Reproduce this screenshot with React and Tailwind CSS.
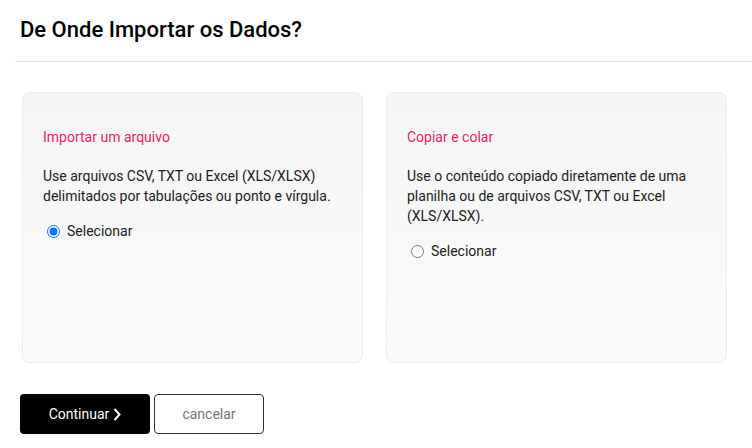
import { useState } from "react";

function OptionCard({ title, text, checked, onSelect }) {
  return (
    <div className="h-[271px] rounded-lg border border-[#ececec] bg-gradient-to-b from-[#f5f5f5] to-[#fafafa] px-[20px] pt-[34px]">
      <h3 className="text-[14px] leading-[20px] text-[#e91e63]">{title}</h3>
      <p className="mt-[19px] text-[14px] leading-[20px] text-[#212121]">{text}</p>
      <label className="mt-[15px] flex items-center gap-[7px] pl-[4px] text-[14px] leading-[20px] text-[#212121] cursor-pointer">
        <input
          type="radio"
          name="origem"
          checked={checked}
          onChange={onSelect}
          className="m-0 h-[13px] w-[13px]"
        />
        Selecionar
      </label>
    </div>
  );
}

export default function App() {
  const [origem, setOrigem] = useState("arquivo");

  return (
    <div className="min-h-[448px] bg-white" style={{ fontFamily: "Roboto, 'Liberation Sans', sans-serif" }}>
      <div className="pl-[20px] pt-[17px] pb-[18px]">
        <h1 className="text-[22px] leading-[26px] font-medium text-black">De Onde Importar os Dados?</h1>
      </div>
      <div className="ml-[15px] border-t border-[#e0e0e0]" />

      <div className="grid grid-cols-2 gap-[23px] pl-[22px] pr-[25px] pt-[30px]">
        <OptionCard
          title="Importar um arquivo"
          text="Use arquivos CSV, TXT ou Excel (XLS/XLSX) delimitados por tabulações ou ponto e vírgula."
          checked={origem === "arquivo"}
          onSelect={() => setOrigem("arquivo")}
        />
        <OptionCard
          title="Copiar e colar"
          text="Use o conteúdo copiado diretamente de uma planilha ou de arquivos CSV, TXT ou Excel (XLS/XLSX)."
          checked={origem === "colar"}
          onSelect={() => setOrigem("colar")}
        />
      </div>

      <div className="flex gap-[4px] pl-[20px] pt-[31px]">
        <button className="flex h-[40px] w-[130px] items-center justify-center gap-[4px] rounded-[4px] bg-black text-[14px] text-white">
          Continuar
          <svg width="8" height="13" viewBox="0 0 8 13" fill="none">
            <path d="M1.5 1 L6.5 6.5 L1.5 12" stroke="white" strokeWidth="2" />
          </svg>
        </button>
        <button className="h-[40px] w-[110px] rounded-[4px] border border-[#333] bg-white text-[14px] text-[#757575]">
          cancelar
        </button>
      </div>
    </div>
  );
}
